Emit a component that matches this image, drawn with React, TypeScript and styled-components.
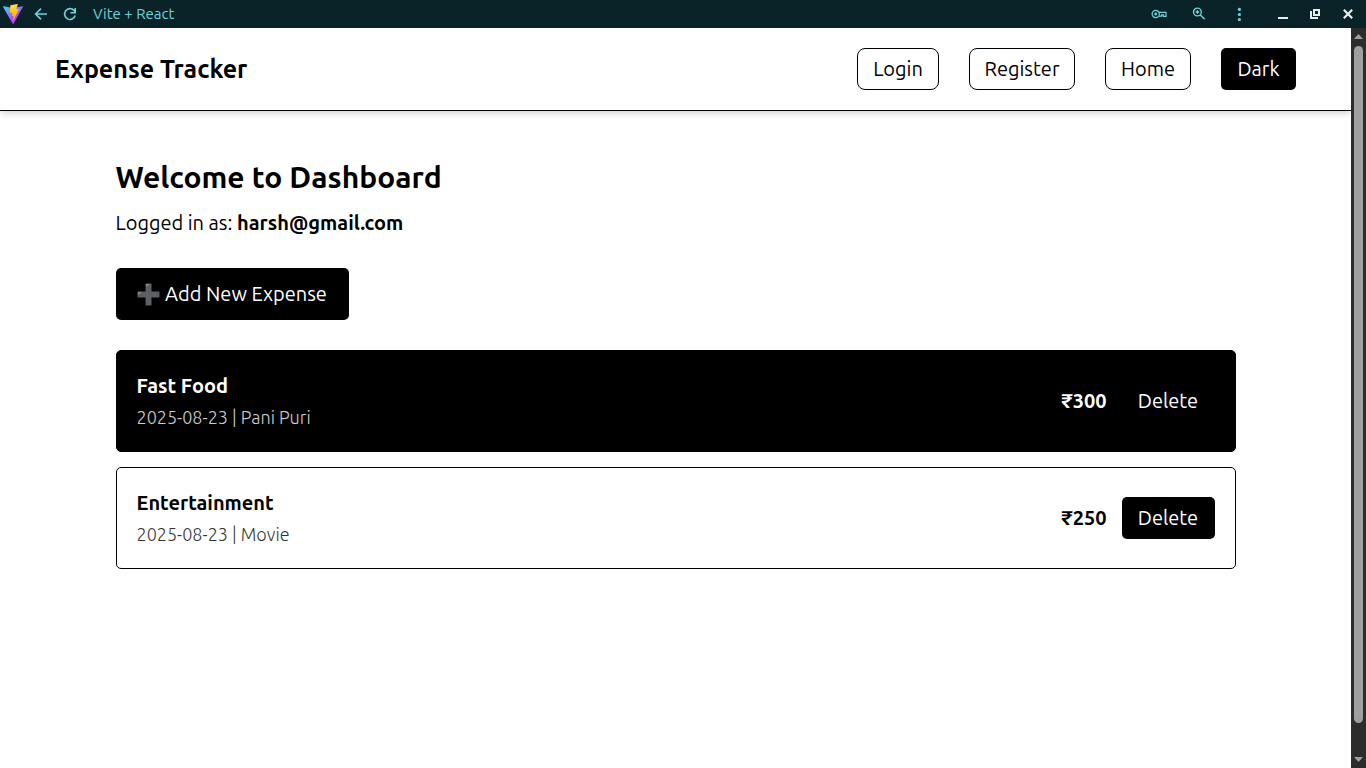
import React from "react";
import styled, { createGlobalStyle } from "styled-components";

const GlobalStyle = createGlobalStyle`
  *, *::before, *::after { box-sizing: border-box; }
  body {
    margin: 0;
    background: #fff;
    color: #000;
    font-family: Ubuntu, "Open Sans", "Noto Sans", sans-serif;
    font-size: 20px;
    font-weight: 400;
    line-height: 24px;
  }
  h1, h2, h3, p, ul { margin: 0; padding: 0; }
  button { font: inherit; cursor: pointer; }
`;

const Window = styled.div`
  display: flex;
  flex-direction: column;
  min-height: 100vh;
`;

const TitleBar = styled.header`
  display: flex;
  align-items: center;
  height: 28px;
  padding: 0 10px 0 3px;
  background: #0a2328;
  color: #6fd3dc;
  font-size: 15px;
  line-height: 20px;
`;

const TitleText = styled.span`
  margin-left: 15px;
`;

const BarButton = styled.button<{ $tone?: string; $gap?: number }>`
  display: flex;
  padding: 0;
  border: 0;
  background: none;
  color: ${(p) => p.$tone ?? "#6fd3dc"};
  margin-left: ${(p) => p.$gap ?? 0}px;
`;

const Spacer = styled.div`
  flex: 1;
`;

const Viewport = styled.div`
  display: flex;
  flex: 1;
`;

const Page = styled.div`
  flex: 1;
  min-width: 0;
`;

const Nav = styled.nav`
  display: flex;
  align-items: center;
  justify-content: space-between;
  padding: 20px 55px;
  border-bottom: 1px solid #000;
  box-shadow: 0 2px 8px rgba(0, 0, 0, 0.2);
`;

const Brand = styled.h2`
  font-size: 25px;
  font-weight: 600;
  line-height: 32px;
`;

const NavLinks = styled.div`
  display: flex;
  gap: 30px;
`;

const NavLink = styled.a<{ $width: number }>`
  display: flex;
  align-items: center;
  justify-content: center;
  width: ${(p) => p.$width}px;
  height: 42px;
  border: 1px solid #000;
  border-radius: 8px;
  color: #000;
  text-decoration: none;
`;

const SolidButton = styled.button<{ $width: number; $tall?: boolean }>`
  display: flex;
  align-items: center;
  justify-content: center;
  gap: 5px;
  width: ${(p) => p.$width}px;
  height: ${(p) => (p.$tall ? 52 : 42)}px;
  padding: 0;
  border: 0;
  border-radius: 5px;
  background: #000;
  color: #fff;
  white-space: nowrap;
`;

const Main = styled.main`
  max-width: 1160px;
  margin: 0 auto;
  padding: 46px 20px;
`;

const Heading = styled.h1`
  font-size: 30px;
  font-weight: 600;
  line-height: 40px;
`;

const LoggedIn = styled.p`
  margin: 14px 0 33px;
`;

const Strong = styled.strong`
  font-weight: 600;
`;

const ExpenseList = styled.ul`
  display: flex;
  flex-direction: column;
  gap: 15px;
  margin-top: 30px;
  list-style: none;
`;

const ExpenseCard = styled.li<{ $dark?: boolean }>`
  display: flex;
  align-items: center;
  justify-content: space-between;
  min-height: 102px;
  padding: 0 20px;
  border: 1px solid #000;
  border-radius: 5px;
  background: ${(p) => (p.$dark ? "#000" : "#fff")};
  color: ${(p) => (p.$dark ? "#fff" : "#000")};
`;

const ExpenseTitle = styled.h3`
  font-size: 20px;
  font-weight: 600;
  line-height: 24px;
`;

const ExpenseMeta = styled.p`
  margin-top: 7px;
  font-size: 18px;
  font-weight: 300;
  opacity: 0.8;
`;

const ExpenseActions = styled.div`
  display: flex;
  align-items: center;
  gap: 15px;
`;

const Amount = styled.span`
  font-weight: 700;
`;

const ScrollTrack = styled.div`
  display: flex;
  flex-direction: column;
  align-items: center;
  justify-content: space-between;
  width: 15px;
  padding: 6px 0;
  background: #2c2c2c;
`;

const ScrollThumb = styled.div`
  flex: 1;
  width: 9px;
  margin: 7px 0 34px;
  border-radius: 5px;
  background: #9f9f9f;
`;

const expenses = [
  { title: "Fast Food", date: "2025-08-23", note: "Pani Puri", amount: 300, dark: true },
  { title: "Entertainment", date: "2025-08-23", note: "Movie", amount: 250, dark: false },
];

const ViteLogo = () => (
  <svg width="20" height="20" viewBox="0 0 256 257" aria-hidden="true">
    <defs>
      <linearGradient id="vite-a" x1="-.8%" x2="57.6%" y1="7.7%" y2="78.4%">
        <stop offset="0%" stopColor="#41d1ff" />
        <stop offset="100%" stopColor="#bd34fe" />
      </linearGradient>
      <linearGradient id="vite-b" x1="43.4%" x2="50.3%" y1="2.2%" y2="89%">
        <stop offset="0%" stopColor="#ffea83" />
        <stop offset="8.3%" stopColor="#ffdd35" />
        <stop offset="100%" stopColor="#ffa800" />
      </linearGradient>
    </defs>
    <path fill="url(#vite-a)" d="M255.2 37.9 134.9 252.98c-2.48 4.44-8.86 4.47-11.38.05L.87 37.96c-2.75-4.81 1.37-10.64 6.82-9.66l120.4 21.52c.77.13 1.55.13 2.32 0L248.3 28.3c5.44-.99 9.58 4.8 6.87 9.6Z" />
    <path fill="url(#vite-b)" d="m185.4.06-89 17.44a3.27 3.27 0 0 0-2.64 3.01l-5.47 92.46a3.27 3.27 0 0 0 4 3.38l24.78-5.72c2.32-.54 4.42 1.5 3.94 3.84l-7.36 36.05c-.5 2.43 1.79 4.5 4.16 3.78l15.3-4.65c2.38-.72 4.66 1.36 4.16 3.79l-11.7 56.62c-.73 3.54 3.98 5.47 5.94 2.43l1.32-2.02 72.5-144.7c1.22-2.42-.88-5.2-3.54-4.68l-25.5 4.92a3.27 3.27 0 0 1-3.77-4.12L189.2 4.18A3.27 3.27 0 0 0 185.4.06Z" />
  </svg>
);

const PlusIcon = () => (
  <svg width="23" height="23" viewBox="0 0 23 23" aria-hidden="true">
    <path fill="#5c5f63" d="M9.2.5h4.6q.7 0 .7.7v7.3h7.3q.7 0 .7.7v4.6q0 .7-.7.7h-7.3v7.3q0 .7-.7.7H9.2q-.7 0-.7-.7v-7.3H1.2q-.7 0-.7-.7V9.2q0-.7.7-.7h7.3V1.2q0-.7.7-.7Z" />
    <path fill="none" stroke="#999c9e" strokeLinecap="round" d="M9.7 3V1.6h2M1.7 11V9.7h2" />
  </svg>
);

const Arrow = ({ down = false }: { down?: boolean }) => (
  <svg width="9" height="5" viewBox="0 0 9 5" aria-hidden="true">
    <path fill="#9f9f9f" d={down ? "M0 0h9L4.5 5Z" : "M0 5h9L4.5 0Z"} />
  </svg>
);

export default function App() {
  return (
    <>
      <GlobalStyle />
      <Window>
        <TitleBar>
          <ViteLogo />
          <BarButton aria-label="Back" $gap={10}>
            <svg width="16" height="16" viewBox="0 0 16 16" fill="none" stroke="currentColor" strokeWidth="1.6">
              <path d="M14 8H3M8 2.6 2.6 8 8 13.4" />
            </svg>
          </BarButton>
          <BarButton aria-label="Reload" $gap={13}>
            <svg width="16" height="16" viewBox="0 0 16 16" fill="none" stroke="currentColor" strokeWidth="1.6">
              <path d="M13.2 9.6A5.4 5.4 0 1 1 12 4.4L13.2 5.6" />
              <path fill="currentColor" stroke="none" d="M14 2v5.6H8.4V6h4V2Z" />
            </svg>
          </BarButton>
          <TitleText>Vite + React</TitleText>
          <Spacer />
          <BarButton aria-label="Passwords">
            <svg width="16" height="16" viewBox="0 0 16 16" fill="none" stroke="currentColor" strokeWidth="1.2">
              <circle cx="4.7" cy="8" r="3.6" />
              <circle cx="4.7" cy="8" r="1.4" fill="currentColor" stroke="none" />
              <path d="M8 6.4h7v4h-2.6V8.8h-1.8v1.4H8" />
            </svg>
          </BarButton>
          <BarButton aria-label="Zoom" $gap={24}>
            <svg width="16" height="16" viewBox="0 0 16 16" fill="none" stroke="currentColor" strokeWidth="1.4">
              <circle cx="6.4" cy="6" r="3.9" />
              <path d="m9.3 8.9 4.4 4.4M6.4 4.2v3.6M4.6 6h3.6" />
            </svg>
          </BarButton>
          <BarButton aria-label="Menu" $gap={24}>
            <svg width="16" height="16" viewBox="0 0 16 16" fill="currentColor">
              <circle cx="8.4" cy="3.4" r="1.6" />
              <circle cx="8.4" cy="8.5" r="1.6" />
              <circle cx="8.4" cy="13.6" r="1.6" />
            </svg>
          </BarButton>
          <BarButton aria-label="Minimize" $tone="#e8eef0" $gap={28}>
            <svg width="16" height="16" viewBox="0 0 16 16" fill="currentColor">
              <path d="M3 11h10v2H3z" />
            </svg>
          </BarButton>
          <BarButton aria-label="Restore" $tone="#e8eef0" $gap={16}>
            <svg width="16" height="16" viewBox="0 0 16 16" fill="none" stroke="currentColor" strokeWidth="2">
              <path d="M7 4h5v5H7zM4 5v7h7" />
            </svg>
          </BarButton>
          <BarButton aria-label="Close" $tone="#e8eef0" $gap={17}>
            <svg width="16" height="16" viewBox="0 0 16 16" fill="none" stroke="currentColor" strokeWidth="2.2">
              <path d="m3.8 3.8 8.4 8.4M12.2 3.8l-8.4 8.4" />
            </svg>
          </BarButton>
        </TitleBar>
        <Viewport>
          <Page>
            <Nav>
              <Brand>Expense Tracker</Brand>
              <NavLinks>
                <NavLink href="#login" $width={82}>Login</NavLink>
                <NavLink href="#register" $width={106}>Register</NavLink>
                <NavLink href="#home" $width={86}>Home</NavLink>
                <SolidButton type="button" $width={75}>Dark</SolidButton>
              </NavLinks>
            </Nav>
            <Main>
              <Heading>Welcome to Dashboard</Heading>
              <LoggedIn>
                Logged in as: <Strong>harsh@gmail.com</Strong>
              </LoggedIn>
              <SolidButton type="button" $width={233} $tall>
                <PlusIcon />
                Add New Expense
              </SolidButton>
              <ExpenseList>
                {expenses.map((e) => (
                  <ExpenseCard key={e.title} $dark={e.dark}>
                    <div>
                      <ExpenseTitle>{e.title}</ExpenseTitle>
                      <ExpenseMeta>{`${e.date} | ${e.note}`}</ExpenseMeta>
                    </div>
                    <ExpenseActions>
                      <Amount>{`₹${e.amount}`}</Amount>
                      <SolidButton type="button" $width={93}>Delete</SolidButton>
                    </ExpenseActions>
                  </ExpenseCard>
                ))}
              </ExpenseList>
            </Main>
          </Page>
          <ScrollTrack aria-hidden="true">
            <Arrow />
            <ScrollThumb />
            <Arrow down />
          </ScrollTrack>
        </Viewport>
      </Window>
    </>
  );
}
